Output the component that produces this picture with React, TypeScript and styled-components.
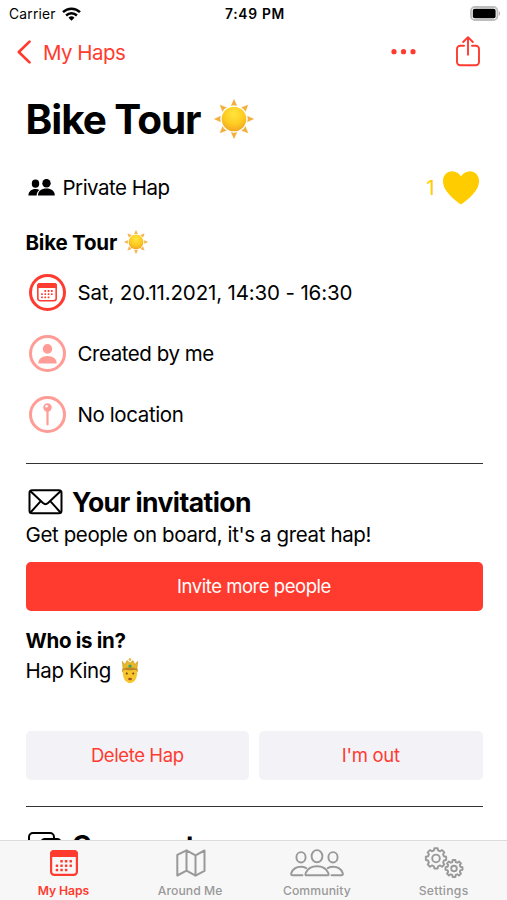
import React from "react";
import styled, { createGlobalStyle } from "styled-components";

const RED = "#ff3b30";
const GRAY = "#999999";

const GlobalStyle = createGlobalStyle`
  * { box-sizing: border-box; }
  body { margin: 0; background: #fff; color: #000; font-family: Inter, "Liberation Sans", sans-serif; }
  svg { display: block; flex: none; }
  button { font: inherit; border: 0; background: none; padding: 0; margin: 0; }
`;

const Screen = styled.div`
  width: 507px;
  height: 900px;
  display: flex;
  flex-direction: column;
  overflow: hidden;
  background: #fff;
`;

const Text = styled.span<{ $size?: number; $weight?: number; $track?: number }>`
  font-size: ${(p) => p.$size ?? 20.5}px;
  font-weight: ${(p) => p.$weight ?? 400};
  letter-spacing: ${(p) => p.$track ?? 0}px;
  white-space: nowrap;
`;

const StatusBar = styled.header`
  flex: none;
  height: 27px;
  padding: 0 6px 0 9px;
  display: grid;
  grid-template-columns: 1fr auto 1fr;
  align-items: center;
`;

const Carrier = styled.div`
  display: flex;
  align-items: center;
  gap: 6px;
`;

const BatterySlot = styled.div`
  justify-self: end;
`;

const NavBar = styled.nav`
  flex: none;
  height: 50px;
  padding: 0 26px 0 16px;
  display: flex;
  align-items: center;
  justify-content: space-between;
  color: ${RED};
`;

const BackButton = styled.button`
  display: flex;
  align-items: center;
  gap: 12px;
  color: ${RED};
`;

const NavActions = styled.div`
  display: flex;
  align-items: center;
  gap: 39px;
`;

const Content = styled.main`
  flex: 1;
  min-height: 0;
  overflow: hidden;
  padding: 0 24.5px 0 25.5px;
`;

const Title = styled.h1`
  margin: 0;
  height: 84px;
  display: flex;
  align-items: center;
  gap: 13px;
`;

const MetaRow = styled.div`
  height: 53px;
  padding: 0 4px 0 2px;
  display: flex;
  align-items: center;
  justify-content: space-between;
`;

const MetaGroup = styled.div<{ $gap: number; $color?: string }>`
  display: flex;
  align-items: center;
  gap: ${(p) => p.$gap}px;
  color: ${(p) => p.$color ?? "#000"};
`;

const Subtitle = styled.h2`
  margin: 0;
  height: 48px;
  padding-top: 8px;
  display: flex;
  align-items: center;
  gap: 7px;
`;

const DetailRow = styled.div`
  height: 61px;
  padding-left: 3px;
  display: flex;
  align-items: center;
  gap: 12px;
`;

const Badge = styled.span<{ $faded?: boolean }>`
  width: 37px;
  height: 37px;
  border: 3px solid ${RED};
  border-radius: 50%;
  display: grid;
  place-items: center;
  opacity: ${(p) => (p.$faded ? 0.5 : 1)};
`;

const Divider = styled.hr<{ $top: number }>`
  margin: ${(p) => p.$top}px 0 0;
  height: 1.5px;
  border: 0;
  background: #333;
`;

const SectionHeading = styled.h2`
  margin: 20.5px 0 0;
  height: 35px;
  padding-left: 2.5px;
  display: flex;
  align-items: center;
  gap: 9px;
`;

const Line = styled.p<{ $top?: number; $gap?: number }>`
  margin: ${(p) => p.$top ?? 0}px 0 0;
  height: 30px;
  display: flex;
  align-items: center;
  gap: ${(p) => p.$gap ?? 0}px;
`;

const ActionButton = styled.button<{ $primary?: boolean }>`
  width: 100%;
  height: 49px;
  border-radius: 5px;
  display: flex;
  align-items: center;
  justify-content: center;
  background: ${(p) => (p.$primary ? RED : "#f2f2f7")};
  color: ${(p) => (p.$primary ? "#fff" : RED)};
`;

const PrimarySlot = styled.div`
  margin-top: 12px;
`;

const ButtonPair = styled.div`
  margin-top: 45px;
  display: grid;
  grid-template-columns: 1fr 1fr;
  gap: 10px;
`;

const TabBar = styled.footer`
  flex: none;
  height: 60px;
  border-top: 1px solid #dcdcdc;
  background: #f7f7f7;
  display: grid;
  grid-template-columns: repeat(4, 1fr);
`;

const Tab = styled.button<{ $active?: boolean }>`
  display: flex;
  flex-direction: column;
  align-items: center;
  color: ${(p) => (p.$active ? RED : GRAY)};
`;

const TabIcon = styled.span`
  height: 43px;
  padding: 1px 0 0 1px;
  display: grid;
  place-items: center;
`;

const TabLabel = styled(Text)`
  line-height: 14px;
`;

const WifiIcon = () => (
  <svg width="19" height="14" viewBox="0 0 19 14" fill="none" stroke="#000" strokeWidth="2.5">
    <path d="M1 5.2a12.2 12.2 0 0 1 17 0" />
    <path d="M4.1 8.5a7.8 7.8 0 0 1 10.8 0" />
    <path d="M9.5 13.8 6.5 10.8a4.3 4.3 0 0 1 6 0z" fill="#000" stroke="none" />
  </svg>
);

const BatteryIcon = () => (
  <svg width="31" height="15" viewBox="0 0 31 15">
    <rect x="1" y="1" width="26.4" height="13" rx="4" fill="#fff" stroke="#bdbdbd" strokeWidth="1.8" />
    <rect x="2.8" y="2.8" width="22.8" height="9.4" rx="2" fill="#000" />
    <path d="M28.8 5.2c1.8.7 1.8 3.9 0 4.6z" fill="#b5b5b5" />
  </svg>
);

const ChevronIcon = () => (
  <svg width="15" height="24" viewBox="0 0 15 24" fill="none" stroke={RED} strokeWidth="2.7" strokeLinecap="round" strokeLinejoin="round">
    <path d="M13.500 1.600 2.800 12l10.700 10.400" />
  </svg>
);

const DotsIcon = () => (
  <svg width="25" height="6" viewBox="0 0 25 6" fill={RED}>
    <circle cx="3" cy="2.700" r="2.600" />
    <circle cx="12.500" cy="2.700" r="2.600" />
    <circle cx="22" cy="2.700" r="2.600" />
  </svg>
);

const ShareIcon = () => (
  <svg width="26" height="32" viewBox="0 0 26 32" fill="none" stroke={RED} strokeWidth="1.9" strokeLinecap="round" strokeLinejoin="round">
    <path d="M9 9.800H5.200A3.200 3.200 0 0 0 2 13v13a3.200 3.200 0 0 0 3.200 3.200h15.600A3.200 3.200 0 0 0 24 26V13a3.200 3.200 0 0 0-3.200-3.200H17" />
    <path d="M13 18.800V1.500M8.200 6 13 1.200 17.800 6" />
  </svg>
);

const SunIcon = ({ size, id }: { size: number; id: string }) => (
  <svg width={size} height={size} viewBox="0 0 40 40">
    <defs>
      <radialGradient id={id} cx=".5" cy=".3" r=".75">
        <stop offset="0" stopColor="#ffe53c" />
        <stop offset=".55" stopColor="#fdcb22" />
        <stop offset="1" stopColor="#f0a020" />
      </radialGradient>
    </defs>
    {[0, 45, 90, 135, 180, 225, 270, 315].map((a) => (
      <path key={a} d="M20 .5 22.700 6.500Q20 5.300 17.300 6.500Z" fill="#f2ad3c" stroke="#f2ad3c" strokeWidth=".5" strokeLinejoin="round" transform={`rotate(${a} 20 20)`} />
    ))}
    <circle cx="20" cy="20" r="12.300" fill={`url(#${id})`} />
  </svg>
);

const PeopleIcon = () => (
  <svg width="27" height="18" viewBox="0 0 27 18">
    <g fill="#000">
      <ellipse cx="7.500" cy="4.700" rx="3.700" ry="4.100" />
      <path d="M.4 16.500C.4 12.500 3.500 10 7.500 10c1.600 0 3 .3 4 .9-2 1.300-2.900 3.200-2.800 5.600z" />
      <ellipse cx="18.500" cy="4.200" rx="4.200" ry="4.300" />
      <path d="M10 16.500c0-4.500 3.600-6.900 8.400-6.900s8.400 2.400 8.400 6.900z" />
    </g>
  </svg>
);

const HeartIcon = () => (
  <svg width="36" height="34" viewBox="0 0 36 34">
    <path d="M18 33.600C12.600 29.500 0 20.500 0 10.200 0 4.300 4.100.300 9.200.300c3.700 0 7 2.100 8.800 5.300 1.800-3.200 5.100-5.300 8.800-5.300 5.100 0 9.200 4 9.200 9.900 0 10.300-12.600 19.300-18 23.400z" fill="#ffcc00" />
  </svg>
);

const CalendarIcon = ({ width, height }: { width: number; height: number }) => (
  <svg width={width} height={height} viewBox="0 0 28 26">
    <rect x="1.100" y="1.100" width="25.800" height="23.800" rx="3.200" fill="none" stroke={RED} strokeWidth="2.200" />
    <path d="M0 7V4a4 4 0 0 1 4-4h20a4 4 0 0 1 4 4v3z" fill={RED} />
    {[
      [10.300, 11.200], [14.900, 11.200], [19.500, 11.200],
      [5.700, 15.600], [10.300, 15.600], [14.900, 15.600], [19.500, 15.600],
      [5.700, 20], [10.300, 20], [14.900, 20],
    ].map(([x, y]) => (
      <rect key={`${x}-${y}`} x={x} y={y - 1.200} width="2.500" height="2.500" rx=".6" fill={RED} />
    ))}
  </svg>
);

const PersonIcon = () => (
  <svg width="19" height="20" viewBox="0 0 19 20" fill={RED}>
    <ellipse cx="9.500" cy="4.900" rx="4.700" ry="4.900" />
    <path d="M.3 19.500c0-4.500 3.700-7.400 9.200-7.400s9.200 2.900 9.200 7.400z" />
  </svg>
);

const PinIcon = () => (
  <svg width="9" height="23" viewBox="0 0 9 23">
    <circle cx="4.500" cy="4.500" r="4.200" fill={RED} />
    <circle cx="3.600" cy="3.300" r="1.300" fill="#fff" />
    <path d="M4.500 8v13.500" stroke={RED} strokeWidth="2.200" strokeLinecap="round" />
  </svg>
);

const EnvelopeIcon = () => (
  <svg width="35" height="26" viewBox="0 0 35 26" fill="none" stroke="#000" strokeWidth="2" strokeLinejoin="round">
    <rect x="1.500" y="1.300" width="32" height="23" rx="2.600" />
    <path d="M2.500 2.300 15 14.100c1.500 1.300 3.500 1.300 5 0L32.500 2.300M2.500 23.500 12.500 12.300M32.500 23.500 22.500 12.300" />
  </svg>
);

const BubblesIcon = () => (
  <svg width="35" height="27" viewBox="0 0 35 27" fill="none" stroke="#000" strokeWidth="2" strokeLinejoin="round">
    <path d="M8 18.500H4.500A3.500 3.500 0 0 1 1 15V5a4 4 0 0 1 4-4h17a4 4 0 0 1 4 4v2" />
    <path d="M17 7h12a4 4 0 0 1 4 4v7a4 4 0 0 1-4 4h-1v4l-4-4h-7a4 4 0 0 1-4-4v-7a4 4 0 0 1 4-4z" />
  </svg>
);

const RoyalIcon = () => (
  <svg width="18" height="27" viewBox="0 0 18 27">
    <path d="M2 12C1 21 4.500 26 9 26s8-5 7-14z" fill="#f7c52b" />
    <path d="M1.200 15.500C.8 10 3 9 9 9s8.200 1 7.800 6.500l-1.600-2.700c-3 .6-9.400.6-12.400 0z" fill="#bd8324" />
    <path d="M1.300 4.300 4 7.600l2-4 3 2.500 3-2.500 2 4 2.700-3.300-.8 7.500c-4-1.500-9.800-1.500-13.800 0z" fill="#e8b72b" stroke="#c8941e" strokeWidth=".6" />
    <circle cx="9" cy="2.600" r="1.300" fill="#e8b72b" />
    <circle cx="9" cy="9" r="1.600" fill="#2aa86b" />
    <circle cx="5.800" cy="16.600" r="1" fill="#6b4216" />
    <circle cx="12.200" cy="16.600" r="1" fill="#6b4216" />
    <ellipse cx="9" cy="22" rx="1.900" ry="1.200" fill="#a0522d" />
  </svg>
);

const MapIcon = () => (
  <svg width="30" height="28" viewBox="0 0 30 28" fill="none" stroke={GRAY} strokeWidth="2" strokeLinejoin="round">
    <path d="M1.300 5.800 10.500 1.300v20.400L1.300 26.500zM10.500 1.300l9 5v20.400l-9-5M19.500 6.300l9-4.800v20.400l-9 4.800" />
  </svg>
);

const CommunityIcon = () => (
  <svg width="54" height="28" viewBox="0 0 54 28" fill="none" stroke={GRAY} strokeWidth="1.900" strokeLinecap="round" strokeLinejoin="round">
    <ellipse cx="11" cy="8.300" rx="4.600" ry="5.200" />
    <ellipse cx="27" cy="7.200" rx="5.400" ry="6.100" />
    <ellipse cx="43" cy="8.300" rx="4.600" ry="5.200" />
    <path d="M16.300 26.300c-1.400 0-.9-1.600-.4-2.700 1.800-4 6-6.300 11.100-6.300s9.300 2.300 11.100 6.300c.5 1.100 1 2.700-.4 2.700z" />
    <path d="M12.500 26.200H2.200c-1.200 0-1.300-1-.9-2.100 1.300-3.700 5-6.300 9.700-6.300 2 0 3.800.5 5.200 1.300M41.500 26.200h10.300c1.200 0 1.300-1 .9-2.100-1.300-3.700-5-6.300-9.700-6.300-2 0-3.800.5-5.200 1.300" />
  </svg>
);

const gearPath = (cx: number, cy: number, outer: number, inner: number, teeth = 8) => {
  const step = (Math.PI * 2) / teeth;
  const points: string[] = [];
  for (let i = 0; i < teeth; i++) {
    const a = i * step - Math.PI / 2;
    [[-0.33, inner], [-0.2, outer], [0.2, outer], [0.33, inner]].forEach(([f, r]) => {
      points.push(`${(cx + Math.cos(a + f * step) * r).toFixed(2)} ${(cy + Math.sin(a + f * step) * r).toFixed(2)}`);
    });
  }
  return `M${points.join("L")}Z`;
};

const GearsIcon = () => (
  <svg width="40" height="32" viewBox="0 0 40 32" fill="none" stroke={GRAY} strokeWidth="1.900" strokeLinejoin="round">
    <path d={gearPath(12, 11.400, 10.300, 8.200)} />
    <circle cx="12" cy="11.400" r="3.800" />
    <path d={gearPath(30, 21.500, 8.600, 6.700)} />
    <circle cx="30" cy="21.500" r="2.800" />
  </svg>
);

export default function App() {
  return (
    <>
      <GlobalStyle />
      <Screen>
        <StatusBar>
          <Carrier>
            <Text $size={13.8} $track={0.22}>Carrier</Text>
            <WifiIcon />
          </Carrier>
          <Text $size={13.8} $weight={600} $track={0.7}>7:49 PM</Text>
          <BatterySlot><BatteryIcon /></BatterySlot>
        </StatusBar>

        <NavBar>
          <BackButton>
            <ChevronIcon />
            <Text $track={-0.55}>My Haps</Text>
          </BackButton>
          <NavActions>
            <DotsIcon />
            <ShareIcon />
          </NavActions>
        </NavBar>

        <Content>
          <Title>
            <Text $size={40.5} $weight={700} $track={-1.05}>Bike Tour</Text>
            <SunIcon size={40} id="sun-large" />
          </Title>

          <MetaRow>
            <MetaGroup $gap={8}>
              <PeopleIcon />
              <Text $track={-0.5}>Private Hap</Text>
            </MetaGroup>
            <MetaGroup $gap={8} $color="#ffcc00">
              <Text>1</Text>
              <HeartIcon />
            </MetaGroup>
          </MetaRow>

          <Subtitle>
            <Text $weight={700} $track={-0.2}>Bike Tour</Text>
            <SunIcon size={24} id="sun-small" />
          </Subtitle>

          <DetailRow>
            <Badge><CalendarIcon width={20} height={18.5} /></Badge>
            <Text $track={-0.15}>Sat, 20.11.2021, 14:30 - 16:30</Text>
          </DetailRow>
          <DetailRow>
            <Badge $faded><PersonIcon /></Badge>
            <Text $track={-0.45}>Created by me</Text>
          </DetailRow>
          <DetailRow>
            <Badge $faded><PinIcon /></Badge>
            <Text $track={-0.4}>No location</Text>
          </DetailRow>

          <Divider $top={17.5} />

          <SectionHeading>
            <EnvelopeIcon />
            <Text $size={26.5} $weight={700} $track={-0.57}>Your invitation</Text>
          </SectionHeading>
          <Line><Text $track={-0.38}>Get people on board, it's a great hap!</Text></Line>
          <PrimarySlot>
            <ActionButton $primary><Text $size={18.5} $track={-0.46}>Invite more people</Text></ActionButton>
          </PrimarySlot>

          <Line $top={15}><Text $weight={700} $track={-0.3}>Who is in?</Text></Line>
          <Line $gap={10}>
            <Text $track={-0.42}>Hap King</Text>
            <RoyalIcon />
          </Line>

          <ButtonPair>
            <ActionButton><Text $size={18.5} $track={-0.4}>Delete Hap</Text></ActionButton>
            <ActionButton><Text $size={18.5} $track={-0.3}>I'm out</Text></ActionButton>
          </ButtonPair>

          <Divider $top={26} />

          <SectionHeading>
            <BubblesIcon />
            <Text $size={26.5} $weight={700} $track={-0.5}>Comments</Text>
          </SectionHeading>
        </Content>

        <TabBar>
          <Tab $active>
            <TabIcon><CalendarIcon width={28} height={26} /></TabIcon>
            <TabLabel $size={12.2} $weight={600} $track={-0.1}>My Haps</TabLabel>
          </Tab>
          <Tab>
            <TabIcon><MapIcon /></TabIcon>
            <TabLabel $size={12.2} $weight={500} $track={0.05}>Around Me</TabLabel>
          </Tab>
          <Tab>
            <TabIcon><CommunityIcon /></TabIcon>
            <TabLabel $size={12.2} $weight={500} $track={0.1}>Community</TabLabel>
          </Tab>
          <Tab>
            <TabIcon><GearsIcon /></TabIcon>
            <TabLabel $size={12.2} $weight={500} $track={0.29}>Settings</TabLabel>
          </Tab>
        </TabBar>
      </Screen>
    </>
  );
}
